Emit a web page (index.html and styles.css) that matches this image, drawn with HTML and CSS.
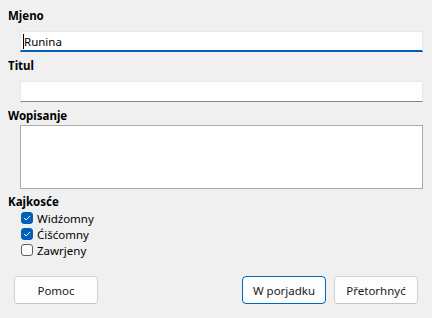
FILE: index.html
```html
<!DOCTYPE html>
<html lang="hsb">
<head>
<meta charset="utf-8">
<title>Kajkosće</title>
<link rel="stylesheet" href="styles.css">
</head>
<body>
<div class="dialog">
  <div class="form">
    <div class="label lbl-first">Mjeno</div>
    <div class="input focused"><span class="caret"></span>Runina</div>
    <div class="label">Titul</div>
    <div class="input"></div>
    <div class="label">Wopisanje</div>
    <div class="textarea"></div>
    <div class="label lbl-group">Kajkosće</div>
    <div class="checks">
      <div class="check-row">
        <span class="box checked"><svg viewBox="0 0 12 12" width="12" height="12"><path d="M3.2 6.2 L5.1 8 L8.8 4.2" fill="none" stroke="#fff" stroke-width="1" stroke-linecap="round" stroke-linejoin="round"/></svg></span>
        <span class="check-text">Widźomny</span>
      </div>
      <div class="check-row">
        <span class="box checked"><svg viewBox="0 0 12 12" width="12" height="12"><path d="M3.2 6.2 L5.1 8 L8.8 4.2" fill="none" stroke="#fff" stroke-width="1" stroke-linecap="round" stroke-linejoin="round"/></svg></span>
        <span class="check-text">Ćišćomny</span>
      </div>
      <div class="check-row">
        <span class="box"></span>
        <span class="check-text">Zawrjeny</span>
      </div>
    </div>
  </div>
  <div class="buttons">
    <button class="btn">Pomoc</button>
    <div class="btn-group">
      <button class="btn default">W porjadku</button>
      <button class="btn">Přetorhnyć</button>
    </div>
  </div>
</div>
</body>
</html>
```
FILE: styles.css
```css
html, body {
  margin: 0;
  padding: 0;
  background: #f0f0f0;
}
body {
  width: 432px;
  height: 318px;
  overflow: hidden;
  font-family: "Noto Sans", "Open Sans", sans-serif;
  font-size: 11.5px;
  color: #000;
}
.dialog {
  display: flex;
  flex-direction: column;
}
.form {
  display: flex;
  flex-direction: column;
  padding: 8px 9px 0 8px;
}
.label {
  font-weight: bold;
  line-height: 16px;
  height: 16px;
  margin-top: 6px;
}
.lbl-first {
  margin-top: 0;
}
.input {
  margin: 7px 0 0 12px;
  box-sizing: border-box;
  height: 21px;
  background: #fff;
  border: 1px solid #e8e8e8;
  border-bottom: 1px solid #868686;
  padding-left: 2px;
  display: flex;
  align-items: center;
}
.input.focused {
  border-bottom: 2px solid #005fb8;
}
.caret {
  display: inline-block;
  width: 1px;
  height: 15px;
  background: #000;
}
.textarea {
  margin: 1px 0 0 12px;
  height: 64px;
  box-sizing: border-box;
  background: #fff;
  border: 1px solid #ababab;
}
.lbl-group {
  margin-top: 5px;
}
.checks {
  display: flex;
  flex-direction: column;
  padding-left: 13px;
}
.check-row {
  display: flex;
  align-items: center;
  height: 16px;
}
.box {
  width: 12px;
  height: 12px;
  box-sizing: border-box;
  border: 1px solid #5f5f5f;
  border-radius: 3px;
  background: #fbfbfb;
  display: flex;
  align-items: center;
  justify-content: center;
  flex: none;
}
.box.checked {
  background: #005fb8;
  border-color: #005fb8;
}
.box svg {
  display: block;
  flex: none;
}
.check-text {
  margin-left: 4px;
}
.buttons {
  display: flex;
  justify-content: space-between;
  padding: 0 14px;
  margin-top: 18px;
}
.btn-group {
  display: flex;
  gap: 8px;
}
.btn {
  width: 84px;
  height: 28px;
  box-sizing: border-box;
  background: #fdfdfd;
  border: 1px solid #d3d3d3;
  border-bottom-color: #c4c4c4;
  border-radius: 4px;
  font-family: inherit;
  font-size: 11.5px;
  color: #1a1a1a;
  padding: 0;
}
.btn.default {
  border: 1px solid #0067c0;
}
```
